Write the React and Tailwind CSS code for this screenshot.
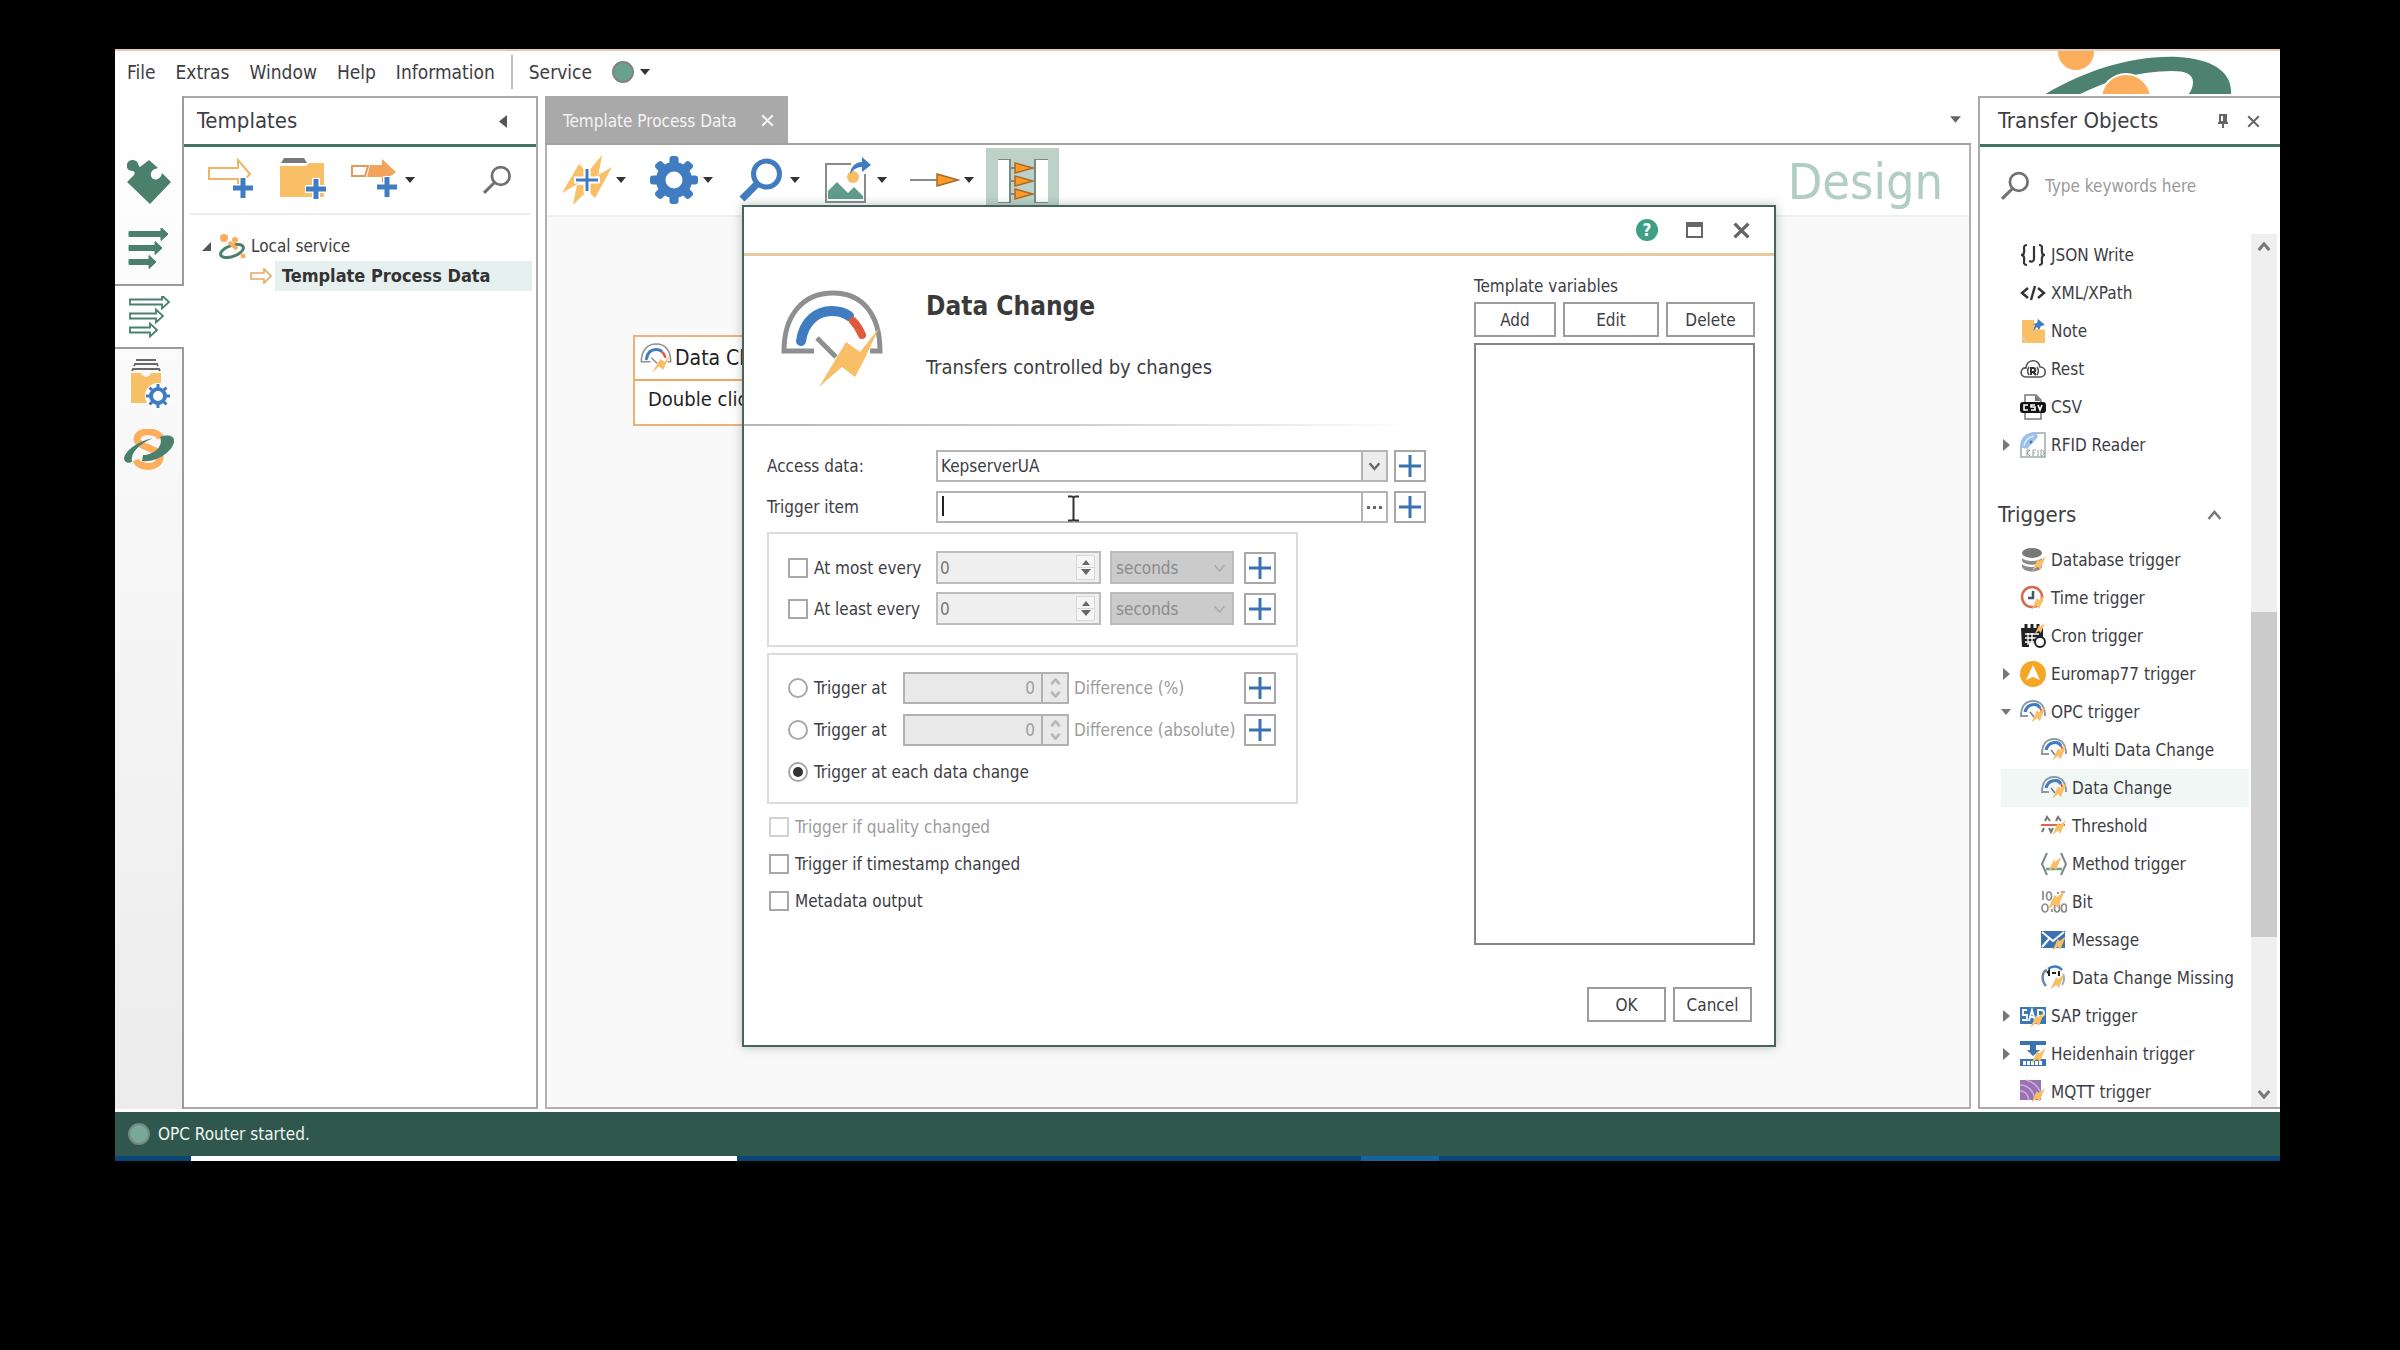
import React from "react";

const GREEN = "#4a806c";
const BLUE = "#3f7cc0";
const YELLOW = "#f8bf66";
const ORANGE = "#fcae5c";

/* ---------- small glyphs ---------- */

const Caret = ({ className = "" }) => (
  <svg className={"h-[6px] w-[10px] shrink-0 " + className} viewBox="0 0 10 6" aria-hidden="true">
    <path d="M0 0h10L5 6z" fill="currentColor" />
  </svg>
);

const Cross = ({ className = "", width = 2.5 }) => (
  <svg className={"shrink-0 " + className} viewBox="0 0 16 16" aria-hidden="true">
    <path d="M1.5 1.5l13 13M14.5 1.5l-13 13" stroke="currentColor" strokeWidth={width} fill="none" />
  </svg>
);

const Chevron = ({ className = "", up = false, width = 3 }) => (
  <svg className={"shrink-0 " + className} viewBox="0 0 16 10" aria-hidden="true">
    <path d={up ? "M2 9l6-7 6 7" : "M2 1l6 7 6-7"} stroke="currentColor" strokeWidth={width} fill="none" />
  </svg>
);

const Magnifier = ({ className = "", color = "#707070", thin = true }) => (
  <svg className={"shrink-0 " + className} viewBox="0 0 44 44" aria-hidden="true">
    <circle cx="27.5" cy="16" r="13" fill="none" stroke={color} strokeWidth={thin ? 4 : 5} />
    <path d="M18 26L3 41" stroke={color} strokeWidth={thin ? 4.5 : 7} />
  </svg>
);

const BOLT = "M24 0L14 8l-3-3L2 24l9-7 4 5z";

const Gauge = ({ className = "" }) => (
  <svg className={"shrink-0 " + className} viewBox="0 0 102 98" aria-hidden="true">
    <path d="M33 61H3C3 25 22 3 52 3s47 22 47 58H89" fill="none" stroke="#8d8f92" strokeWidth="5" />
    <path d="M20 51C23 31 36 21 51 21c8 0 13 2 17 5" fill="none" stroke={BLUE} strokeWidth="10" strokeLinecap="round" />
    <path d="M72 31c5 5 7 9 9 14" fill="none" stroke="#e0593c" strokeWidth="8" strokeLinecap="round" />
    <path d="M36 48l19 19" stroke="#8d8f92" strokeWidth="5" />
    <path d="M98 38L84 68 74 87 61 77 38 97 65 52l14 10z" fill={YELLOW} />
  </svg>
);

const PlusGlyph = ({ className = "" }) => (
  <svg className={"shrink-0 " + className} viewBox="0 0 22 22" aria-hidden="true">
    <path d="M11 0v22M0 11h22" stroke="#3b72b4" strokeWidth="3" />
  </svg>
);

/* ---------- toolbar drawings ---------- */

const BigPlus = ({ x, y }) => (
  <g>
    <path d={`M${x} ${y - 11}v22M${x - 11} ${y}h22`} stroke="#fff" strokeWidth="8" />
    <path d={`M${x} ${y - 10}v20M${x - 10} ${y}h20`} stroke={BLUE} strokeWidth="5" />
  </g>
);

const NewTemplate = () => (
  <svg className="h-[44px] w-[48px]" viewBox="0 0 48 44" aria-hidden="true">
    <path d="M2 10h29V2l12 14-12 13v-8H2z" fill="#fff" stroke="#eab765" strokeWidth="2" />
    <BigPlus x={36} y={30} />
  </svg>
);

const NewFolder = () => (
  <svg className="h-[44px] w-[48px]" viewBox="0 0 48 44" aria-hidden="true">
    <path d="M1 5L4 0h20l3 5z" fill="#77787a" />
    <path d="M0 8h26l3-3h15v34H0z" fill={YELLOW} />
    <BigPlus x={36} y={31} />
  </svg>
);

const CopyTemplate = () => (
  <svg className="h-[44px] w-[48px]" viewBox="0 0 48 44" aria-hidden="true">
    <path d="M1 8h16l-3 10H1z" fill="#fff" stroke="#e59a58" strokeWidth="2" />
    <path d="M19 7h12V1l14 13-14 11v-6H16z" fill="#f2a45a" />
    <BigPlus x={36} y={29} />
  </svg>
);

const Bolts = () => (
  <svg className="h-[50px] w-[50px]" viewBox="0 0 50 50" aria-hidden="true">
    <path d="M0 38L17 9l5 5 2 10zM40 0L26 17l2 8 8-3zM50 12L33 43l-8-8 3-10zM11 50l4-20h9l1 6z" fill={YELLOW} />
    <path d="M25 12v26M12 25h26" stroke="#fff" strokeWidth="7" />
    <path d="M25 14v22M14 25h22" stroke={BLUE} strokeWidth="3" />
  </svg>
);

const Gear = ({ className = "h-[48px] w-[48px]", hole = 8.5 }) => (
  <svg className={"shrink-0 " + className} viewBox="0 0 48 48" aria-hidden="true">
    {[0, 45, 90, 135].map((a) => (
      <rect key={a} x="19.5" y="0" width="9" height="48" rx="3" fill={BLUE} transform={`rotate(${a} 24 24)`} />
    ))}
    <circle cx="24" cy="24" r="18" fill={BLUE} />
    <circle cx="24" cy="24" r={hole} fill="#fff" />
  </svg>
);

const PictureExport = () => (
  <svg className="h-[46px] w-[46px]" viewBox="0 0 46 46" aria-hidden="true">
    <path d="M26 7H1v38h39V17" fill="#fff" stroke="#8b8b8b" strokeWidth="2" />
    <circle cx="28" cy="20" r="6" fill={YELLOW} />
    <path d="M3 42V34l9-9 11 11 6-6 9 9v3z" fill="#5f9c8b" />
    <path d="M25 17c1-8 6-12 12-12V0l9 8-9 7v-5c-5 0-8 2-12 7z" fill={BLUE} />
  </svg>
);

const Connector = () => (
  <svg className="h-[16px] w-[50px]" viewBox="0 0 50 16" aria-hidden="true">
    <path d="M0 8h28" stroke="#8b8b8b" strokeWidth="2" />
    <path d="M27 2l21 6-21 6z" fill="#ff9a26" stroke="#a86a2a" strokeWidth="1.5" />
  </svg>
);

const Mapping = () => (
  <svg className="h-[44px] w-[50px]" viewBox="0 0 50 44" aria-hidden="true">
    <path d="M0 0h12v44H0zM37 0h13v44H37z" fill="#fff" />
    <path d="M0 0h12v44H0M50 0H37v44h13" fill="none" stroke="#7c8a84" strokeWidth="2" />
    {[9, 22, 35].map((y) => (
      <g key={y}>
        <path d={`M12 ${y}h6`} stroke="#7c8a84" strokeWidth="2" />
        <path d={`M17 ${y - 5}l18 5-18 5z`} fill="#ff9a26" stroke="#a86a2a" strokeWidth="1.5" />
      </g>
    ))}
  </svg>
);

/* ---------- navigation drawings ---------- */

const Puzzle = () => (
  <svg className="h-[44px] w-[44px]" viewBox="0 0 44 44" aria-hidden="true">
    <path
      d="M22 0l9 8c-5 1-8 4-7 8 2 6 10 4 11-3l9 9-21 22L0 22l7-7c1-2 1-3-1-4-5 0-7-3-6-7C1 0 6-1 9 1c3 2 2 5 4 6z"
      fill={GREEN}
    />
  </svg>
);

const ARROWS = [
  [6, 41],
  [20, 35],
  [34, 29],
];

const Arrows = ({ outline = false }) => (
  <svg className="h-[42px] w-[44px]" viewBox="0 0 44 42" aria-hidden="true">
    {ARROWS.map(([y, end]) => (
      <path
        key={y}
        d={`M2 ${y - 2.5}h${end - 9}v-4l7 6.5-7 6.5v-4H2z`}
        fill={outline ? "#fff" : GREEN}
        stroke={GREEN}
        strokeWidth={outline ? 1.8 : 1}
      />
    ))}
  </svg>
);

const ArchiveGear = () => (
  <svg className="h-[50px] w-[42px]" viewBox="0 0 42 50" aria-hidden="true">
    <path d="M6 1h20M4 7l1-2h22l1 2M2 12l1-2h26l1 2" stroke="#686868" strokeWidth="1.800" fill="none" />
    <path d="M1 14h10c2 5 8 5 10 0h10v30H1z" fill={YELLOW} />
    <circle cx="28" cy="37" r="13" fill="#fff" />
    {[0, 45, 90, 135].map((a) => (
      <rect key={a} x="26.5" y="25" width="3" height="24" fill={BLUE} transform={`rotate(${a} 28 37)`} />
    ))}
    <circle cx="28" cy="37" r="7" fill="#fff" stroke={BLUE} strokeWidth="4" />
  </svg>
);

const RouterMark = () => (
  <svg className="h-[42px] w-[52px]" viewBox="0 0 52 42" aria-hidden="true">
    <path d="M38 9C34 1 15 0 14 10c0 9 24 9 23 19-1 11-21 11-24 2" fill="none" stroke={ORANGE} strokeWidth="7" />
    <path d="M30 9C12 13 2 23 1 29c0 4 4 6 8 4C7 24 16 15 30 9z" fill={GREEN} />
    <path d="M37 8c9-3 15-1 14 5-2 10-18 21-32 19l1-6c10 0 21-8 17-18z" fill={GREEN} />
  </svg>
);

const ServiceMark = () => (
  <svg className="h-[26px] w-[27px]" viewBox="0 0 27 26" aria-hidden="true">
    <circle cx="5" cy="5" r="4" fill={ORANGE} />
    <ellipse cx="13" cy="18" rx="12" ry="5.5" transform="rotate(-20 13 18)" fill="none" stroke={GREEN} strokeWidth="3" />
    <circle cx="16" cy="7" r="3" fill={ORANGE} />
    <path d="M10 9l8 7" stroke={ORANGE} strokeWidth="4" />
    <circle cx="24" cy="23" r="2.5" fill={ORANGE} />
  </svg>
);

const Brand = () => (
  <svg className="h-[43px] w-[190px]" viewBox="0 0 190 43" aria-hidden="true">
    <path d="M0 44C40 20 88 4 134 6c36 2 55 16 53 38h-43c4-5 5-9 5-13 0-8-8-11-21-11-34 0-66 10-94 24z" fill="#4c826f" />
    <circle cx="32" cy="1" r="18" fill={ORANGE} />
    <circle cx="82" cy="48" r="26" fill="#fff" />
    <circle cx="82" cy="48" r="24" fill={ORANGE} />
  </svg>
);

/* ---------- transfer object icons ---------- */

const Bolt = ({ t = "translate(11 9) scale(.62)" }) => <path d={BOLT} transform={t} fill={YELLOW} />;

const ICONS = {
  json: (
    <g fill="none" stroke="#333" strokeWidth="2.2">
      <path d="M7 3C2 3 5 8 4 10c0 2-1 3-3 3 2 0 3 1 3 3 1 2-2 7 3 7M19 3c5 0 2 5 3 7 0 2 1 3 3 3-2 0-3 1-3 3-1 2 2 7-3 7" />
      <path d="M14 4v13c0 3-3 3-5 2" />
    </g>
  ),
  xml: <path d="M8 8L2 13l6 5M18 8l6 5-6 5M15 6l-4 14" fill="none" stroke="#333" strokeWidth="2.4" />,
  note: (
    <g>
      <path d="M2 2h12l1 9 10 1v13H8l-6-7z" fill={YELLOW} />
      <path d="M2 18l6 7H2z" fill="#e4c795" />
      <path d="M18 1l7 6-4 1-2 4-2-3-4 4 2-6-2-1 4-1z" fill={BLUE} />
    </g>
  ),
  rest: (
    <g fill="none" stroke="#555" strokeWidth="1.6">
      <path d="M6 21c-7 0-6-10 0-9C7 3 18 2 20 11c7 0 7 10 0 10z" />
      <path d="M9 11c-2 3-2 5 0 8M17 11c2 3 2 5 0 8" />
      <path d="M11 19v-7h2c3 0 3 4 0 4l3 3" strokeWidth="2" stroke="#333" />
    </g>
  ),
  csv: (
    <g>
      <path d="M5 1h11l5 5v19H5z" fill="#fff" stroke="#777" strokeWidth="1.500" />
      <path d="M15 1v6h6" fill="#777" />
      <rect x="0" y="8" width="26" height="11" rx="3" fill="#111" />
      <path d="M8 11H4v5h4M15 11h-4v2h4v3h-4M18 11l2 5 2-5" fill="none" stroke="#fff" strokeWidth="1.600" />
    </g>
  ),
  rfid: (
    <g>
      <path d="M12 1h13v24H1V14" fill="#fff" stroke="#9aa" strokeWidth="1.5" />
      <path d="M0 15C0 6 6 0 16 0l2 5-11 12z" fill="#9cc0e6" />
      <path d="M4 14c1-6 5-9 10-10" stroke="#dce9f6" strokeWidth="1.5" fill="none" />
      <circle cx="11" cy="10" r="1.5" fill="#3f7cc0" />
      <path d="M7 24v-6h3l-3 3 3 3M13 24v-6h3M13 21h2M18 18v6M21 18v6c4 0 4-6 0-6" stroke="#9a9a9a" fill="none" />
    </g>
  ),
  database: (
    <g>
      <ellipse cx="12" cy="6" rx="10" ry="5" fill="#77787a" />
      <path d="M2 11c3 4 17 4 20 0v3c-3 5-17 5-20 0zM2 17c3 4 17 4 20 0v3c-3 6-17 6-20 0z" fill="#8b8c8e" />
      <Bolt />
    </g>
  ),
  time: (
    <g>
      <circle cx="12" cy="12" r="10" fill="#fff" stroke="#d4694c" strokeWidth="2.500" />
      <path d="M13 6v7H8" fill="none" stroke="#456" strokeWidth="2.5" />
      <Bolt t="translate(10 10) scale(.62)" />
    </g>
  ),
  cron: (
    <g>
      <path d="M1 5h22v15H9v4H2z" fill="#222" />
      <path d="M6 1v7M12 1v7M18 1v7" stroke="#222" strokeWidth="3" />
      <path d="M5 11h14M5 15h12M5 19h9M8 10v12M12 10v12" stroke="#fff" strokeWidth="1.300" />
      <circle cx="20" cy="19" r="5" fill="#fff" stroke="#222" strokeWidth="2" />
      <Bolt t="translate(14 0) scale(.45)" />
    </g>
  ),
  euromap: (
    <g>
      <circle cx="13" cy="13" r="13" fill="#f5a623" />
      <path d="M13 4l7 15-7-3-7 3z" fill="#fff" />
    </g>
  ),
  gauge: (
    <g>
      <path d="M8 17H1C1 8 5 2 13 2s12 6 12 15" fill="none" stroke="#8d9aa6" strokeWidth="2" />
      <path d="M5 13c2-8 12-10 15-4" fill="none" stroke={BLUE} strokeWidth="3" />
      <path d="M20 9l2 4" stroke="#e0593c" strokeWidth="2" />
      <path d="M10 13l4 5" stroke="#777" strokeWidth="1.5" />
      <Bolt t="translate(10 8) scale(.65)" />
    </g>
  ),
  threshold: (
    <g>
      <path d="M0 12h24" stroke="#d4694c" strokeWidth="2" />
      <path d="M4 8l2-4 3 4M15 8l2-4 3 4M3 15l-2 4M8 15l2 4 2-4" fill="none" stroke="#777" strokeWidth="2" />
      <Bolt t="translate(10 7) scale(.62)" />
    </g>
  ),
  method: (
    <g>
      <path d="M6 2L1 13l5 11M20 2l5 11-5 11" fill="none" stroke="#7b8b88" strokeWidth="2" />
      <path d="M5 18h16" stroke="#6aa58a" strokeWidth="2.5" />
      <Bolt t="translate(6 6) scale(.6)" />
    </g>
  ),
  bit: (
    <g fill="none" stroke="#8a8a8a" strokeWidth="1.700">
      <path d="M2 2v9" />
      <ellipse cx="8" cy="7" rx="2.500" ry="4" />
      <path d="M20 3h4M17 3v2" />
      <ellipse cx="4" cy="19" rx="3" ry="4" />
      <path d="M11 20v3" />
      <ellipse cx="16" cy="19" rx="2.500" ry="4" />
      <ellipse cx="23" cy="19" rx="2.500" ry="4" />
      <g stroke="none">
        <Bolt t="translate(5 2) scale(.78)" />
      </g>
    </g>
  ),
  message: (
    <g>
      <rect x="0" y="4" width="24" height="17" fill="#3c73ae" />
      <path d="M1 5l11 9L23 5M1 20l7-8" fill="none" stroke="#fff" strokeWidth="2" />
      <Bolt t="translate(10 9) scale(.62)" />
    </g>
  ),
  missing: (
    <g fill="none">
      <path d="M5 21C-1 14 2 6 6 5" stroke="#6a89ad" strokeWidth="2.500" />
      <path d="M7 4c5-4 11-3 14 1" stroke={BLUE} strokeWidth="2.500" />
      <path d="M6 8l2-2v5M11 8h4M18 6v5" stroke="#222" strokeWidth="2" />
      <path d="M22 9c2 4 1 8-1 11" stroke="#9ab" strokeWidth="2" />
      <Bolt t="translate(8 9) scale(.65)" />
    </g>
  ),
  sap: (
    <g>
      <path d="M0 4h26v17H0z" fill="#3c78b5" />
      <path d="M7 7H3v5h4v5H2M9 18l3-11 3 11M10 14h4M18 18V7h3c4 0 4 6 0 6h-2" fill="none" stroke="#fff" strokeWidth="1.800" />
      <Bolt t="translate(9 9) scale(.65)" />
    </g>
  ),
  heidenhain: (
    <g>
      <path d="M0 0h26v4H16v5h4l-7 6-6-6h3V4H0z" fill="#3c73ae" />
      <path d="M0 18h26v7H0z" fill="#3c73ae" />
      <path d="M3 22h20" stroke="#fff" strokeWidth="4" strokeDasharray="3 1" />
      <Bolt t="translate(10 7) scale(.65)" />
    </g>
  ),
  mqtt: (
    <g>
      <path d="M0 1h21v20H0z" fill="#9b72b5" />
      <path d="M0 6c8 0 14 6 15 15M0 12c5 0 8 4 9 9M6 1c8 2 13 8 15 14" fill="none" stroke="#c9b0d8" strokeWidth="1.500" />
      <Bolt t="translate(10 9) scale(.62)" />
    </g>
  ),
};

const OBJECTS = [
  { icon: "json", label: "JSON Write" },
  { icon: "xml", label: "XML/XPath" },
  { icon: "note", label: "Note" },
  { icon: "rest", label: "Rest" },
  { icon: "csv", label: "CSV" },
  { icon: "rfid", label: "RFID Reader", state: "closed" },
];

const TRIGGERS = [
  { icon: "database", label: "Database trigger" },
  { icon: "time", label: "Time trigger" },
  { icon: "cron", label: "Cron trigger" },
  { icon: "euromap", label: "Euromap77 trigger", state: "closed" },
  { icon: "gauge", label: "OPC trigger", state: "open" },
  { icon: "gauge", label: "Multi Data Change", child: true },
  { icon: "gauge", label: "Data Change", child: true, active: true },
  { icon: "threshold", label: "Threshold", child: true },
  { icon: "method", label: "Method trigger", child: true },
  { icon: "bit", label: "Bit", child: true },
  { icon: "message", label: "Message", child: true },
  { icon: "missing", label: "Data Change Missing", child: true },
  { icon: "sap", label: "SAP trigger", state: "closed" },
  { icon: "heidenhain", label: "Heidenhain trigger", state: "closed" },
  { icon: "mqtt", label: "MQTT trigger" },
];

const ObjectRow = ({ icon, label, state, child, active }) => (
  <li className={"flex h-[38px] items-center " + (active ? "bg-[#f0f7f5]" : "")}>
    <span className={"flex justify-start text-[#777] " + (child ? "w-[40px]" : "w-[19px]")}>
      {state === "closed" && (
        <svg className="ml-[2px] h-[12px] w-[7px]" viewBox="0 0 7 12" aria-hidden="true">
          <path d="M0 0l7 6-7 6z" fill="currentColor" />
        </svg>
      )}
      {state === "open" && <Caret />}
    </span>
    <svg className="mr-[5px] h-[26px] w-[26px] shrink-0" viewBox="0 0 26 26" aria-hidden="true">
      {ICONS[icon]}
    </svg>
    <span className="whitespace-nowrap">{label}</span>
  </li>
);

/* ---------- panels ---------- */

const MenuBar = () => (
  <header className="flex h-[47px] items-start justify-between border-t-2 border-[#e6c9b4] text-[19px]">
    <nav className="flex h-[42px] items-center gap-[20px] pl-[12px]">
      {["File", "Extras", "Window", "Help", "Information"].map((m) => (
        <button key={m} type="button">
          {m}
        </button>
      ))}
      <span className="-mx-[4px] h-[34px] w-[2px] bg-[#bdbdbd]" />
      <button type="button">Service</button>
      <button type="button" aria-label="Service status" className="flex items-center gap-[6px] text-[#333]">
        <span className="h-[22px] w-[22px] rounded-full border-2 border-[#7d8582] bg-[#6aa08e]" />
        <Caret className="h-[5px] w-[9px]" />
      </button>
    </nav>
    <div className="mr-[46px] overflow-hidden">
      <Brand />
    </div>
  </header>
);

const SideNav = () => (
  <nav className="flex w-[69px] shrink-0 flex-col bg-gradient-to-b from-white to-[#ececec]">
    <div className="flex h-[190px] flex-col items-center gap-[24px] border-r-2 border-b-2 border-[#9b9b9b] pt-[64px]">
      <button type="button" aria-label="Plug-ins">
        <Puzzle />
      </button>
      <button type="button" aria-label="Connections">
        <Arrows />
      </button>
    </div>
    <div className="flex h-[61px] items-center justify-center bg-white">
      <button type="button" aria-label="Templates">
        <Arrows outline />
      </button>
    </div>
    <div className="flex flex-1 flex-col items-center gap-[20px] border-t-2 border-r-2 border-[#9b9b9b] pt-[10px]">
      <button type="button" aria-label="Project archive" className="ml-[4px]">
        <ArchiveGear />
      </button>
      <button type="button" aria-label="Router status">
        <RouterMark />
      </button>
    </div>
  </nav>
);

const TemplatesPanel = () => (
  <section className="flex w-[354px] shrink-0 flex-col border-t-2 border-r-2 border-b-2 border-[#a9a9a9] bg-white">
    <div className="flex h-[49px] items-center justify-between border-b-[3px] border-[#437563] pr-[29px] pl-[13px]">
      <h2 className="text-[22px]">Templates</h2>
      <button type="button" aria-label="Collapse panel">
        <svg className="h-[13px] w-[8px]" viewBox="0 0 8 13" aria-hidden="true">
          <path d="M8 0v13L0 6.500z" fill="#555" />
        </svg>
      </button>
    </div>
    <div className="mx-[6px] flex h-[68px] items-center border-b-2 border-[#ececec] pr-[18px] pl-[17px]">
      <button type="button" aria-label="New template" className="mr-[25px]">
        <NewTemplate />
      </button>
      <button type="button" aria-label="New folder" className="mr-[23px]">
        <NewFolder />
      </button>
      <button type="button" aria-label="Copy template" className="flex items-center gap-[6px] text-[#333]">
        <CopyTemplate />
        <Caret className="h-[5px] w-[9px]" />
      </button>
      <button type="button" aria-label="Search" className="ml-auto">
        <Magnifier className="h-[30px] w-[30px]" />
      </button>
    </div>
    <div className="mt-[16px] mr-[4px] ml-[18px]">
      <div className="flex h-[30px] items-center">
        <svg className="h-[9px] w-[9px]" viewBox="0 0 9 9" aria-hidden="true">
          <path d="M9 0v9H0z" fill="#555" />
        </svg>
        <span className="mr-[5px] ml-[8px]">
          <ServiceMark />
        </span>
        <span>Local service</span>
      </div>
      <div className="flex h-[30px] items-center pl-[48px]">
        <svg className="h-[16px] w-[22px]" viewBox="0 0 22 16" aria-hidden="true">
          <path d="M1 5h13V1l7 7-7 7v-4H1z" fill="#fff" stroke="#e8a862" strokeWidth="1.600" />
        </svg>
        <span className="ml-[3px] flex h-[30px] flex-1 items-center bg-[#e6f0ee] pl-[7px] text-[18px] font-bold whitespace-nowrap text-[#333]">
          Template Process Data
        </span>
      </div>
    </div>
  </section>
);

const ToolButton = ({ label, children, width = "w-[87px]" }) => (
  <button type="button" aria-label={label} className={"flex h-[50px] shrink-0 items-center text-[#333] " + width}>
    <span className="mr-[4px] flex w-[50px] justify-center">{children}</span>
    <Caret className="h-[6px] w-[8px]" />
  </button>
);

const AddButton = ({ label }) => (
  <button
    type="button"
    aria-label={label}
    className="flex h-[32px] w-[32px] shrink-0 items-center justify-center border-2 border-[#a8a8a8] bg-white"
  >
    <PlusGlyph className="h-[22px] w-[22px]" />
  </button>
);

const TickBox = ({ id, label, disabled }) => (
  <label htmlFor={id} className={"flex items-center gap-[6px] " + (disabled ? "text-[#9c9c9c]" : "")}>
    <input
      id={id}
      type="checkbox"
      disabled={disabled}
      className={
        "h-[20px] w-[20px] shrink-0 appearance-none border-2 bg-white " +
        (disabled ? "border-[#d2d2d2]" : "border-[#a8a8a8]")
      }
    />
    {label}
  </label>
);

const RadioDot = ({ id, label, checked }) => (
  <label htmlFor={id} className="flex items-center gap-[6px]">
    <input
      id={id}
      type="radio"
      name="mode"
      defaultChecked={checked}
      className="h-[20px] w-[20px] shrink-0 appearance-none rounded-full border-2 border-[#a8a8a8] bg-white bg-clip-content p-[3px] checked:bg-[#333]"
    />
    {label}
  </label>
);

const IntervalRow = ({ id, label }) => (
  <div className="flex h-[33px] items-center">
    <div className="w-[148px]">
      <TickBox id={id} label={label} />
    </div>
    <div className="flex h-[33px] w-[165px] items-center border-2 border-[#bdbdbd] bg-[#efefef] pr-[4px]">
      <input
        aria-label={label + " value"}
        defaultValue="0"
        disabled
        className="min-w-0 flex-1 pl-[2px] text-[#777]"
      />
      <span className="flex h-[25px] w-[19px] flex-col items-center justify-between border border-[#d8d8d8] bg-[#f5f5f5] py-[4px] text-[#666]">
        <svg className="h-[5px] w-[8px]" viewBox="0 0 8 5" aria-hidden="true">
          <path d="M0 5h8L4 0z" fill="currentColor" />
        </svg>
        <span className="h-px w-full bg-[#d8d8d8]" />
        <Caret className="h-[5px] w-[8px]" />
      </span>
    </div>
    <div className="relative ml-[9px] text-[#8b8b8b]">
      <select
        aria-label={label + " unit"}
        disabled
        className="h-[33px] w-[124px] appearance-none border-2 border-[#bcbcbc] bg-[#cbcbcb] pl-[4px] opacity-100"
      >
        <option>seconds</option>
      </select>
      <Chevron className="pointer-events-none absolute top-[13px] right-[8px] h-[9px] w-[13px] text-[#aaa]" width={2} />
    </div>
    <div className="ml-auto">
      <AddButton label={label + " variable"} />
    </div>
  </div>
);

const DifferenceRow = ({ id, unit }) => (
  <div className="flex h-[32px] items-center">
    <div className="w-[115px]">
      <RadioDot id={id} label="Trigger at" />
    </div>
    <div className="flex h-[32px] w-[166px] items-stretch border-2 border-[#b2b2b2] bg-[#e9e9e9]">
      <input
        aria-label={"Trigger at " + unit}
        defaultValue="0"
        disabled
        className="min-w-0 flex-1 pr-[6px] text-right text-[#a0a0a0]"
      />
      <span className="flex w-[26px] flex-col items-center justify-between border-l-2 border-[#b2b2b2] py-[4px] text-[#b8b8b8]">
        <Chevron up className="h-[7px] w-[11px]" width={4} />
        <Chevron className="h-[7px] w-[11px]" width={4} />
      </span>
    </div>
    <span className="ml-[5px] whitespace-nowrap text-[#9c9c9c]">{unit}</span>
    <div className="ml-auto">
      <AddButton label={unit + " variable"} />
    </div>
  </div>
);

const DialogButton = ({ children, className }) => (
  <button type="button" className={"h-[35px] border-2 border-[#9c9c9c] bg-white " + className}>
    {children}
  </button>
);

const DataChangeDialog = () => (
  <div
    role="dialog"
    aria-labelledby="dialog-title"
    className="absolute top-[109px] right-[195px] bottom-[62px] left-[197px] flex flex-col border-2 border-[#49635f] bg-white shadow-[0_0_10px_rgba(60,90,85,0.35)]"
  >
    <div className="flex h-[49px] items-center justify-end gap-[28px] border-b-[3px] border-[#e8c99d] pr-[24px] text-[#666]">
      <button
        type="button"
        aria-label="Help"
        className="flex h-[22px] w-[22px] items-center justify-center rounded-full bg-[#3d9f83] font-bold text-white"
      >
        ?
      </button>
      <button type="button" aria-label="Maximize" className="h-[16px] w-[17px] border-2 border-t-[5px] border-[#666]" />
      <button type="button" aria-label="Close" className="ml-[2px]">
        <Cross className="h-[17px] w-[17px]" width={3.2} />
      </button>
    </div>
    <div className="flex min-h-0 flex-1">
      <div className="flex-1">
        <div className="flex h-[168px] pl-[37px]">
          <Gauge className="mt-[34px] h-[98px] w-[102px]" />
          <div className="mt-[34px] ml-[43px]">
            <h1 id="dialog-title" className="text-[26px] leading-[32px] font-bold text-[#3a3a3a]">
              Data Change
            </h1>
            <p className="mt-[31px] text-[20px] leading-[28px]">Transfers controlled by changes</p>
          </div>
        </div>
        <div className="mr-[60px] h-[2px] bg-gradient-to-r from-[#b5b5b5] via-[#cfcfcf] to-white" />

        <form className="pl-[23px]">
          <div className="mt-[24px] flex items-center">
            <label htmlFor="access" className="w-[169px]">
              Access data:
            </label>
            <div className="relative w-[452px]">
              <select
                id="access"
                className="h-[32px] w-full appearance-none border-2 border-[#b4b4b4] bg-white pl-[3px]"
                defaultValue="KepserverUA"
              >
                <option>KepserverUA</option>
              </select>
              <span className="pointer-events-none absolute top-0 right-0 flex h-[32px] w-[27px] items-center justify-center border-2 border-[#b4b4b4] bg-[#ececec] text-[#666]">
                <Chevron className="h-[9px] w-[13px]" />
              </span>
            </div>
            <div className="ml-[6px]">
              <AddButton label="Access data variable" />
            </div>
          </div>
          <div className="mt-[9px] flex items-center">
            <label htmlFor="item" className="w-[169px]">
              Trigger item
            </label>
            <div className="relative flex h-[32px] w-[452px] border-2 border-[#b4b4b4]">
              <input id="item" type="text" className="min-w-0 flex-1 pl-[4px] outline-none" />
              <span className="absolute top-[3px] left-[4px] h-[20px] w-[2px] bg-[#222]" />
              <svg className="absolute top-[2px] left-[129px] h-[27px] w-[13px]" viewBox="0 0 13 27" aria-hidden="true">
                <path d="M1 1.500h4l1.500 1L8 1.500h4M6.500 2v23M1 25.500h4l1.500-1 1.500 1h4" fill="none" stroke="#333" strokeWidth="2" />
              </svg>
              <button
                type="button"
                aria-label="Browse items"
                className="flex w-[25px] items-center justify-center gap-[3px] border-l-2 border-[#b4b4b4]"
              >
                <span className="h-[3px] w-[3px] bg-[#666]" />
                <span className="h-[3px] w-[3px] bg-[#666]" />
                <span className="h-[3px] w-[3px] bg-[#666]" />
              </button>
            </div>
            <div className="ml-[6px]">
              <AddButton label="Trigger item variable" />
            </div>
          </div>

          <fieldset className="mt-[9px] flex h-[115px] w-[531px] flex-col gap-[8px] border-2 border-[#dcdcdc] pt-[17px] pr-[20px] pl-[19px]">
            <IntervalRow id="most" label="At most every" />
            <IntervalRow id="least" label="At least every" />
          </fieldset>

          <fieldset className="mt-[6px] flex h-[151px] w-[531px] flex-col gap-[10px] border-2 border-[#dcdcdc] pt-[17px] pr-[20px] pl-[19px]">
            <DifferenceRow id="percent" unit="Difference (%)" />
            <DifferenceRow id="absolute" unit="Difference (absolute)" />
            <div className="flex h-[32px] items-center">
              <RadioDot id="each" label="Trigger at each data change" checked />
            </div>
          </fieldset>

          <div className="mt-[11px] flex flex-col gap-[13px] pl-[2px]">
            <TickBox id="quality" label="Trigger if quality changed" disabled />
            <TickBox id="stamp" label="Trigger if timestamp changed" />
            <TickBox id="meta" label="Metadata output" />
          </div>
        </form>
      </div>

      <div className="mr-[19px] flex w-[281px] shrink-0 flex-col pt-[18px] pb-[23px]">
        <span className="leading-[24px]">Template variables</span>
        <div className="mt-[4px] flex gap-[7px]">
          <DialogButton className="w-[82px]">Add</DialogButton>
          <DialogButton className="flex-1">Edit</DialogButton>
          <DialogButton className="w-[89px]">Delete</DialogButton>
        </div>
        <div className="mt-[6px] min-h-0 flex-1 border-2 border-[#858585]" />
        <div className="mt-[42px] mr-[3px] flex justify-end gap-[7px]">
          <DialogButton className="w-[79px]">OK</DialogButton>
          <DialogButton className="w-[79px]">Cancel</DialogButton>
        </div>
      </div>
    </div>
  </div>
);

const Designer = () => (
  <main className="relative flex min-w-0 flex-1 flex-col">
    <div className="flex h-[49px] items-stretch justify-between border-b-2 border-[#a3a3a3]">
      <div className="flex w-[243px] items-center justify-between bg-[#a9a9a9] pt-[2px] pr-[14px] pl-[18px] text-[#f4f4f4]">
        <span className="whitespace-nowrap">Template Process Data</span>
        <button type="button" aria-label="Close tab">
          <Cross className="h-[13px] w-[13px]" />
        </button>
      </div>
      <button type="button" aria-label="Open documents" className="mr-[10px] text-[#666]">
        <Caret className="h-[7px] w-[11px]" />
      </button>
    </div>
    <div className="flex min-h-0 flex-1 flex-col border-r-2 border-b-2 border-l-2 border-[#b4b0b2] bg-[#f9f9f9]">
      <div className="flex h-[72px] items-start justify-between border-b-2 border-[#efefef] bg-white pr-[26px] pl-[15px]">
        <div className="flex pt-[10px]">
          <ToolButton label="Add trigger">
            <Bolts />
          </ToolButton>
          <ToolButton label="Settings">
            <Gear />
          </ToolButton>
          <ToolButton label="Zoom">
            <Magnifier className="h-[44px] w-[44px]" color={BLUE} thin={false} />
          </ToolButton>
          <ToolButton label="Export picture">
            <PictureExport />
          </ToolButton>
          <ToolButton label="Connection style" width="w-[76px]">
            <Connector />
          </ToolButton>
          <button
            type="button"
            aria-label="Mapping view"
            className="-mt-[7px] flex h-[66px] w-[73px] items-center justify-center bg-[#bcd2c9]"
          >
            <Mapping />
          </button>
        </div>
        <span className="pt-[5px] text-[50px] leading-[64px] text-[#b0cec6]">Design</span>
      </div>
      <div className="relative min-h-0 flex-1">
        <div className="absolute top-[118px] left-[86px] w-[240px] border-2 border-[#ecb378] bg-white text-[#222]">
          <div className="flex h-[44px] items-center gap-[3px] border-b-2 border-[#f0a868] pl-[5px] text-[21px]">
            <Gauge className="h-[30px] w-[32px]" />
            Data Change
          </div>
          <div className="h-[43px] pl-[13px] text-[20px] leading-[36px] whitespace-nowrap">Double click here</div>
        </div>
      </div>
    </div>
    <DataChangeDialog />
  </main>
);

const ObjectsPanel = () => (
  <aside className="flex w-[302px] shrink-0 flex-col border-t-2 border-b-2 border-l-2 border-[#a9a9a9] bg-white">
    <div className="flex h-[49px] items-center border-b-[3px] border-[#437563] pr-[20px] pl-[18px] text-[#666]">
      <h2 className="flex-1 text-[22px] text-[#3d3d44]">Transfer Objects</h2>
      <button type="button" aria-label="Pin panel" className="mr-[18px]">
        <svg className="h-[14px] w-[12px]" viewBox="0 0 12 14" aria-hidden="true">
          <path d="M3 1h6v7H3zM1 9h10M6 9v5" fill="none" stroke="currentColor" strokeWidth="2" />
          <path d="M6 1h3v7H6z" fill="currentColor" />
        </svg>
      </button>
      <button type="button" aria-label="Close panel">
        <Cross className="h-[13px] w-[13px]" width={2.5} />
      </button>
    </div>
    <div className="flex h-[87px] shrink-0 items-start pt-[24px] pl-[20px]">
      <Magnifier className="h-[30px] w-[30px]" />
      <input
        type="search"
        aria-label="Search objects"
        placeholder="Type keywords here"
        className="ml-[15px] h-[30px] w-[200px] outline-none placeholder:text-[#9a9a9a]"
      />
    </div>
    <div className="flex min-h-0 flex-1">
      <div className="min-w-0 flex-1 overflow-hidden pt-[2px] pl-[21px]">
        <ul>
          {OBJECTS.map((o) => (
            <ObjectRow key={o.label} {...o} />
          ))}
        </ul>
        <button type="button" className="-ml-[3px] mt-[30px] mb-[5px] flex h-[42px] w-[225px] items-center justify-between text-[22px]">
          Triggers
          <Chevron up className="h-[10px] w-[17px] text-[#777]" width={2.5} />
        </button>
        <ul>
          {TRIGGERS.map((o) => (
            <ObjectRow key={o.label} {...o} />
          ))}
        </ul>
      </div>
      <div className="mr-[3px] ml-[2px] flex w-[26px] shrink-0 flex-col items-center bg-[#efefef] text-[#777]">
        <Chevron up className="my-[8px] h-[9px] w-[14px]" width={3.5} />
        <div className="grow-[352] basis-0" />
        <div className="w-full grow-[324] basis-0 bg-[#cbcbcb]" />
        <div className="grow-[145] basis-0" />
        <Chevron className="my-[8px] h-[9px] w-[14px]" width={3.5} />
      </div>
    </div>
  </aside>
);

const StatusBar = () => (
  <footer className="mt-[3px] shrink-0">
    <div className="flex h-[44px] items-center gap-[8px] bg-[#30574d] pl-[13px] text-[#eef4f1]">
      <span className="h-[22px] w-[22px] rounded-full border-2 border-[#75877f] bg-[#78a897]" />
      OPC Router started.
    </div>
    <div className="flex h-[5px] bg-[#0a4675]">
      <span className="ml-[76px] w-[546px] bg-white" />
      <span className="ml-[624px] w-[78px] bg-[#1763a0]" />
    </div>
  </footer>
);

export default function App() {
  return (
    <div className="h-screen bg-black pt-[49px] pr-[120px] pb-[189px] pl-[115px] font-['DejaVu_Sans_Condensed','Noto_Sans',sans-serif] text-[17px] leading-[24px] text-[#3d3d44]">
      <div className="flex h-full flex-col bg-white">
        <MenuBar />
        <div className="flex min-h-0 flex-1">
          <SideNav />
          <TemplatesPanel />
          <div className="w-[7px] shrink-0" />
          <Designer />
          <div className="w-[7px] shrink-0" />
          <ObjectsPanel />
        </div>
        <StatusBar />
      </div>
    </div>
  );
}
